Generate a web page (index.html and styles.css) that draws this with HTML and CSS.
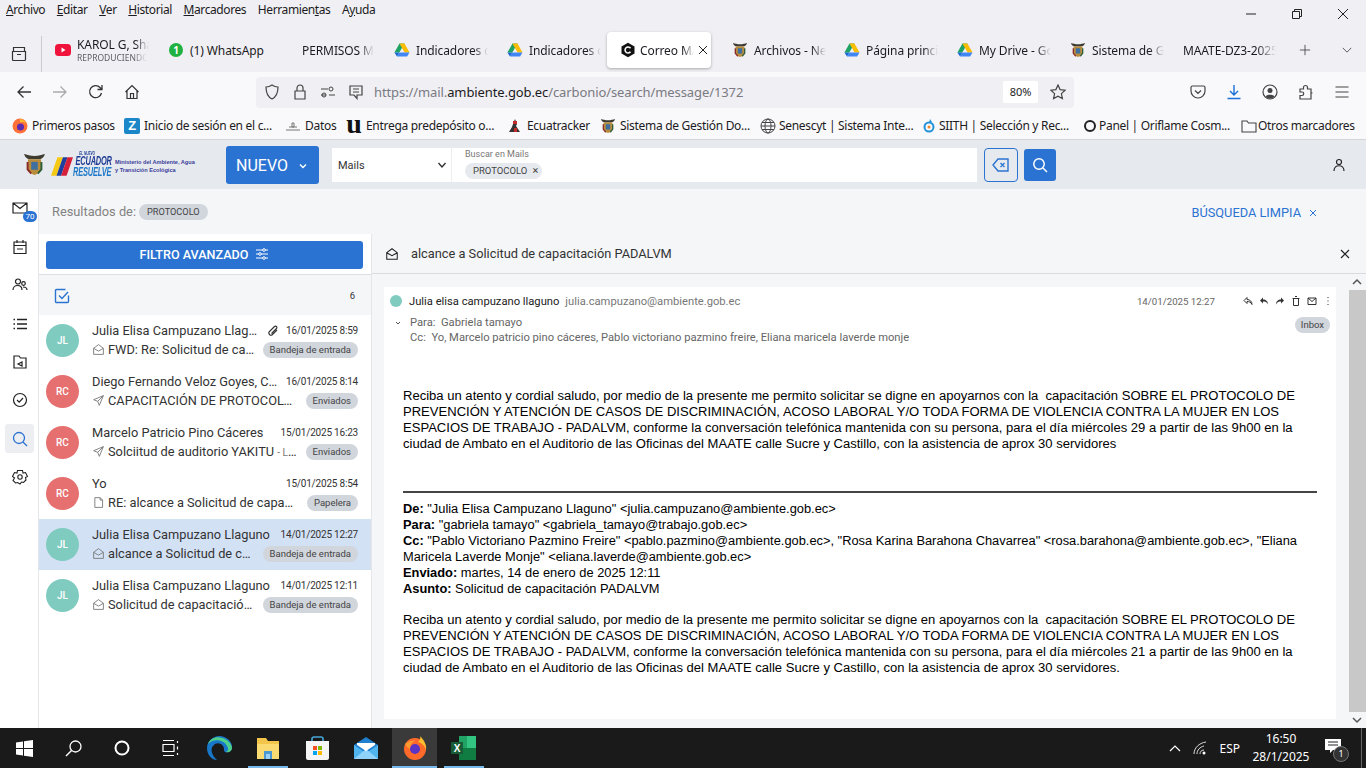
FILE: index.html
```html
<!DOCTYPE html>
<html lang="es">
<head>
<meta charset="utf-8">
<title>Correo MAATE</title>
<link rel="stylesheet" href="styles.css">
</head>
<body>
<svg class="defs" width="0" height="0">
  <symbol id="drive" viewBox="0 0 16 16"><path d="M5.500 1.500h5L5.300 10.500H.4z" fill="#1ea362"/><path d="M5.500 1.500h5l5 9h-5z" fill="#fbbc04"/><path d="M3 14.500l2.300-4h10.200l-2.400 4z" fill="#4285f4"/><path d="M.4 10.500h4.900l-2.300 4z" fill="#1967d2"/></symbol>
  <symbol id="coat" viewBox="0 0 16 18"><path d="M0 1c2 .5 5 1.500 8 1.500S14 1.500 16 1c-1 3-3 4-5 4H5C3 5 1 4 0 1z" fill="#3d3a30"/><path d="M3 5h10v7c0 2-2 4-5 5-3-1-5-3-5-5z" fill="#b98d3c"/><path d="M5.500 7h5v6h-5z" fill="#3f6f9e"/><path d="M2 7v6l3 3.500 1-1-2.500-3V7z" fill="#8c2a2a"/><path d="M14 7v6l-3 3.500-1-1 2.500-3V7z" fill="#2f5f3a"/></symbol>
  <symbol id="open" viewBox="0 0 16 16"><path d="M2 6.500 8 2l6 4.500V14H2z M2 6.500 8 10l6-3.500" fill="none" stroke="currentColor" stroke-width="1.100"/></symbol>
  <symbol id="send" viewBox="0 0 16 16"><path d="M14 2 2 7l5 2 2 5zM7 9l7-7" fill="none" stroke="currentColor" stroke-width="1.100"/></symbol>
  <symbol id="file" viewBox="0 0 16 16"><path d="M3.500 2H10l3 3v9H3.500zM10 2v3h3" fill="none" stroke="currentColor" stroke-width="1.100"/></symbol>
</svg>

<div class="menu-row">
  <span class="menu-item"><u>A</u>rchivo</span><span class="menu-item"><u>E</u>ditar</span><span class="menu-item"><u>V</u>er</span><span class="menu-item"><u>H</u>istorial</span><span class="menu-item"><u>M</u>arcadores</span><span class="menu-item">Herramien<u>t</u>as</span><span class="menu-item">A<u>y</u>uda</span>
  <div class="win-controls">
    <svg class="win-btn" viewBox="0 0 46 12"><path d="M18 6h10" stroke="#222" fill="none"/></svg>
    <svg class="win-btn" viewBox="0 0 46 12"><path d="M18.500 3.500h7v7h-7zM20.500 3.500v-2h7v7h-2" stroke="#222" fill="none"/></svg>
    <svg class="win-btn" viewBox="0 0 46 12"><path d="M18 1l10 10M28 1 18 11" stroke="#222" fill="none"/></svg>
  </div>
</div>

<div class="tab-row">
  <div class="tab-side"><svg width="16" height="16" viewBox="0 0 16 16"><path d="M1.500 5.500h13v8a1 1 0 0 1-1 1h-11a1 1 0 0 1-1-1zM2.500 1.500h11v4h-11zM6 8.500h4" fill="none" stroke="#333" stroke-width="1.200"/></svg></div>
  <div class="tab"><svg class="fav" viewBox="0 0 16 16"><rect y="2" width="16" height="12" rx="3.500" fill="#f0143c"/><path d="M6.500 5.500v5l4-2.500z" fill="#fff"/></svg><div class="tab-two"><span class="tab-text">KAROL G, Sha</span><span class="tab-sub">REPRODUCIENDO</span></div></div>
  <div class="tab"><svg class="fav" viewBox="0 0 16 16"><circle cx="8" cy="8" r="7" fill="#1fb141"/><text x="8" y="11.500" class="fav-num">1</text></svg><span class="tab-full">(1) WhatsApp</span></div>
  <div class="tab tab-noicon"><span class="tab-text">PERMISOS M</span></div>
  <div class="tab"><svg class="fav"><use href="#drive"/></svg><span class="tab-text">Indicadores d</span></div>
  <div class="tab"><svg class="fav"><use href="#drive"/></svg><span class="tab-text">Indicadores d</span></div>
  <div class="tab tab-active"><svg class="fav" viewBox="0 0 16 16"><path d="M8 .8 14.500 4.500v7L8 15.200 1.500 11.500v-7z" fill="#111"/><path d="M10.500 6.200A3 3 0 1 0 10.500 9.800" fill="none" stroke="#fff" stroke-width="1.600"/></svg><span class="tab-text tab-short">Correo MA</span><svg class="tab-x" viewBox="0 0 10 10"><path d="M1 1l8 8M9 1 1 9" stroke="#222" fill="none"/></svg></div>
  <div class="tab tab-gap"><svg class="fav"><use href="#coat"/></svg><span class="tab-text">Archivos - Ne</span></div>
  <div class="tab"><svg class="fav"><use href="#drive"/></svg><span class="tab-text">Página princip</span></div>
  <div class="tab"><svg class="fav"><use href="#drive"/></svg><span class="tab-text">My Drive - Go</span></div>
  <div class="tab"><svg class="fav"><use href="#coat"/></svg><span class="tab-text">Sistema de G</span></div>
  <div class="tab tab-noicon"><span class="tab-text tab-last">MAATE-DZ3-2025</span></div>
  <svg class="tab-plus" viewBox="0 0 14 14"><path d="M7 1v12M1 7h12" stroke="#444" fill="none"/></svg>
  <svg class="tab-more" viewBox="0 0 14 14"><path d="M2 4.500 7 9.500l5-5" stroke="#444" fill="none"/></svg>
</div>

<div class="nav-row">
  <svg class="nav-ic" viewBox="0 0 16 16"><path d="M15 8H2M7.500 2.500 2 8l5.500 5.500" stroke="#333" stroke-width="1.300" fill="none"/></svg>
  <svg class="nav-ic dim" viewBox="0 0 16 16"><path d="M1 8h13M8.500 2.500 14 8l-5.500 5.500" stroke="#aaa" stroke-width="1.300" fill="none"/></svg>
  <svg class="nav-ic" viewBox="0 0 16 16"><path d="M13.500 9A6 6 0 1 1 12 3.500L14 5.500M14 1v4.500H9.500" stroke="#333" stroke-width="1.300" fill="none"/></svg>
  <svg class="nav-ic" viewBox="0 0 16 16"><path d="M1.500 8 8 1.500 14.500 8M3 6.500V14.500h10V6.500M6.500 14.500V9.500h3v5" stroke="#333" stroke-width="1.200" fill="none"/></svg>
  <div class="address">
    <svg class="addr-ic" viewBox="0 0 16 16"><path d="M8 1c2 1.500 4 2 6 2 0 6-2 10-6 12C4 13 2 9 2 3c2 0 4-.5 6-2z" stroke="#444" stroke-width="1.200" fill="none"/></svg>
    <svg class="addr-ic" viewBox="0 0 16 16"><path d="M3 7h10v8H3zM5 7V4a3 3 0 0 1 6 0v3" stroke="#444" stroke-width="1.200" fill="none"/></svg>
    <svg class="addr-ic" viewBox="0 0 16 16"><path d="M1 5h7M1 11h5M9 11h6" stroke="#444" stroke-width="1.200" fill="none"/><circle cx="11" cy="5" r="2" stroke="#444" fill="none"/><circle cx="4" cy="11" r="2" stroke="#444" fill="none"/></svg>
    <svg class="addr-ic" viewBox="0 0 16 16"><path d="M2 2h12v9H9v3.500L6 11H2zM5 5h6M5 8h6" stroke="#444" stroke-width="1.200" fill="none"/></svg>
    <span class="url">https://mail.<b>ambiente.gob.ec</b>/carbonio/search/message/1372</span>
    <span class="zoom-badge">80%</span>
    <svg class="star" viewBox="0 0 16 16"><path d="M8 1l2.100 4.600 5 .6-3.700 3.400 1 4.900L8 12.100l-4.400 2.400 1-4.900L.9 6.200l5-.6z" stroke="#444" stroke-width="1.200" fill="none"/></svg>
  </div>
  <div class="nav-right">
    <svg class="nav-ic2" viewBox="0 0 16 16"><path d="M2.500 2h11A1.500 1.500 0 0 1 15 3.500V7A7 7 0 0 1 1 7V3.500A1.500 1.500 0 0 1 2.500 2zM5 6.500l3 3 3-3" stroke="#444" stroke-width="1.200" fill="none"/></svg>
    <svg class="nav-ic2" viewBox="0 0 16 16"><path d="M8 1v9.500M4 7l4 4 4-4M1.500 14.500h13" stroke="#1a6fd8" stroke-width="1.400" fill="none"/></svg>
    <svg class="nav-ic2" viewBox="0 0 16 16"><circle cx="8" cy="8" r="7" stroke="#444" stroke-width="1.200" fill="none"/><circle cx="8" cy="6.500" r="2.500" fill="#444"/><path d="M3.500 12.500c1-2.500 8-2.500 9 0a6 6 0 0 1-9 0z" fill="#444"/></svg>
    <svg class="nav-ic2" viewBox="0 0 16 16"><path d="M2 5h3.500V3.500a2 2 0 0 1 4 0V5H13v4h1.500a2 2 0 0 1 0 0H13v6H2v-3.500h2a1.700 1.700 0 0 0 0-3.500H2z" stroke="#444" stroke-width="1.200" fill="none"/></svg>
    <svg class="nav-ic2" viewBox="0 0 16 16"><path d="M1.500 3h13M1.500 8h13M1.500 13h13" stroke="#444" stroke-width="1.200" fill="none"/></svg>
  </div>
</div>

<div class="bm-row">
  <span class="bm w1"><svg class="bm-ic" viewBox="0 0 16 16"><circle cx="8" cy="8" r="7.500" fill="#ff7139"/><circle cx="8.500" cy="9" r="3.500" fill="#5b2bb0"/><path d="M8 .5c3 2 5 1 7 6-1-2-3-3-7-2z" fill="#ffbd2e"/></svg>Primeros pasos</span>
  <span class="bm w2"><span class="z-ic">Z</span>Inicio de sesión en el c...</span>
  <span class="bm w3"><svg class="bm-ic" viewBox="0 0 16 16"><path d="M1 12h14M4 9h8M7 5h2v4H7z" stroke="#777" fill="none"/></svg>Datos</span>
  <span class="bm w2"><span class="u-ic">u</span>Entrega predepósito o...</span>
  <span class="bm w4"><svg class="bm-ic" viewBox="0 0 16 16"><path d="M8 1l2 5-1 2 4 6H2l3-5 1-3z" fill="#333"/><path d="M6 3h4v3H6zM7 10h3v4H7z" fill="#c52a2a"/></svg>Ecuatracker</span>
  <span class="bm w5"><svg class="bm-ic"><use href="#coat"/></svg>Sistema de Gestión Do...</span>
  <span class="bm w2 g3"><svg class="bm-ic" viewBox="0 0 16 16"><circle cx="8" cy="8" r="7" stroke="#444" fill="none"/><ellipse cx="8" cy="8" rx="3" ry="7" stroke="#444" fill="none"/><path d="M1 8h14M2 4.500h12M2 11.500h12" stroke="#444" fill="none"/></svg>Senescyt | Sistema Inte...</span>
  <span class="bm w6 g2"><svg class="bm-ic" viewBox="0 0 16 16"><circle cx="8" cy="9" r="4.500" stroke="#2492d8" stroke-width="2" fill="none"/><circle cx="8" cy="9" r="1.500" fill="#ef8a2b"/><path d="M9 1l2 3-3 1z" fill="#2492d8"/></svg>SIITH | Selección y Rec...</span>
  <span class="bm w7 g1"><svg class="bm-ic" viewBox="0 0 16 16"><circle cx="8" cy="8" r="5" stroke="#222" stroke-width="2" fill="none"/></svg>Panel | Oriflame Cosm...</span>
  <span class="bm g1"><svg class="bm-ic" viewBox="0 0 16 16"><path d="M1 3h5l1.500 2H15v9H1z" stroke="#444" stroke-width="1.100" fill="none"/></svg>Otros marcadores</span>
</div>

<header class="app-head">
  <div class="logo">
    <svg class="logo-coat"><use href="#coat"/></svg>
    <svg class="logo-flag" viewBox="0 0 24 20"><path d="M7 0h6L6 20H0z" fill="#f6c915"/><path d="M13 0h5l-7 20H6z" fill="#1f3f9e"/><path d="M18 0h6l-7 20h-6z" fill="#d6203a"/></svg>
    <div class="logo-words"><span class="lw1">EL NUEVO</span><span class="lw2">ECUADOR</span><span class="lw3">RESUELVE</span></div>
    <div class="logo-min"><span>Ministerio del Ambiente, Agua</span><span>y Transición Ecológica</span></div>
  </div>
  <button class="btn-new">NUEVO<svg class="btn-chev" viewBox="0 0 10 10"><path d="M2 3.500 5 6.500 8 3.500" stroke="#fff" stroke-width="1.400" fill="none"/></svg></button>
  <div class="sel"><span>Mails</span><svg class="sel-chev" viewBox="0 0 10 10"><path d="M1.500 3 5 7l3.500-4" stroke="#333" stroke-width="1.400" fill="none"/></svg></div>
  <div class="search">
    <span class="search-label">Buscar en Mails</span>
    <span class="search-chip">PROTOCOLO<i class="chip-x">×</i></span>
  </div>
  <button class="btn-clear"><svg width="18" height="16" viewBox="0 0 18 16"><path d="M6 2h10v12H6L1 8zM8.500 6l4 4M12.500 6l-4 4" stroke="#2b73d2" stroke-width="1.400" fill="none"/></svg></button>
  <button class="btn-search"><svg width="16" height="16" viewBox="0 0 16 16"><circle cx="7" cy="7" r="5.200" stroke="#fff" stroke-width="1.500" fill="none"/><path d="M11 11l4 4" stroke="#fff" stroke-width="1.500"/></svg></button>
  <svg class="user-ic" viewBox="0 0 14 14"><circle cx="7" cy="4" r="2.500" stroke="#222" stroke-width="1.200" fill="none"/><path d="M2 13c0-7 10-7 10 0" stroke="#222" stroke-width="1.200" fill="none"/></svg>
</header>

<main class="app">
  <nav class="rail">
    <div class="rail-item rail-mail"><svg class="rail-ic" viewBox="0 0 16 16"><path d="M1 2h14v10H1zM1 2l7 5.500L15 2" stroke="#222" stroke-width="1.200" fill="none"/></svg><span class="rail-badge">70</span></div>
    <div class="rail-item"><svg class="rail-ic" viewBox="0 0 16 16"><path d="M2 3h12v11.500H2zM2 6.500h12M5 1v3M11 1v3M5 10h6" stroke="#222" stroke-width="1.200" fill="none"/></svg></div>
    <div class="rail-item"><svg class="rail-ic" viewBox="0 0 16 16"><circle cx="6" cy="4.500" r="2.500" stroke="#222" stroke-width="1.200" fill="none"/><circle cx="11.500" cy="6.500" r="1.800" stroke="#222" stroke-width="1.200" fill="none"/><path d="M1 13c0-6 9-6 9 0M11 10c3 0 4 1 4 3" stroke="#222" stroke-width="1.200" fill="none"/></svg></div>
    <div class="rail-item"><svg class="rail-ic" viewBox="0 0 16 16"><path d="M5 3.500h10M5 8h10M5 12.500h10M1.500 3.500h1.500M1.500 8h1.500M1.500 12.500h1.500" stroke="#222" stroke-width="1.300" fill="none"/></svg></div>
    <div class="rail-item"><svg class="rail-ic" viewBox="0 0 16 16"><path d="M2 2h5l1.500 2H14v10H2zM6 10l4-2v4z" stroke="#222" stroke-width="1.200" fill="none"/></svg></div>
    <div class="rail-item"><svg class="rail-ic" viewBox="0 0 16 16"><circle cx="8" cy="8" r="6.500" stroke="#222" stroke-width="1.200" fill="none"/><path d="M5 8l2.200 2.200L11 6" stroke="#222" stroke-width="1.200" fill="none"/></svg></div>
    <div class="rail-item rail-active"><svg class="rail-ic" viewBox="0 0 16 16"><circle cx="7" cy="7" r="5.500" stroke="#2b73d2" stroke-width="1.300" fill="none"/><path d="M11 11l4 4" stroke="#2b73d2" stroke-width="1.300"/></svg></div>
    <div class="rail-item"><svg class="rail-ic" viewBox="0 0 16 16"><path d="M5.500 1.500h5L11 4l2.500-.5 2 4-2 1 .5 2.500-2.500 2.500-2-.5L8 15l-2.500-1.500-2 .5L1 11.500l1.500-2.500-2-1.500 2-4L5 4z" stroke="#222" stroke-width="1.100" fill="none"/><circle cx="8" cy="8" r="2.200" stroke="#222" stroke-width="1.100" fill="none"/></svg></div>
  </nav>

  <section class="results">
    <div class="res-top">
      <div class="res-left"><span class="res-label">Resultados de:</span><span class="res-chip">PROTOCOLO</span></div>
      <div class="res-clean">BÚSQUEDA LIMPIA<svg class="clean-x" viewBox="0 0 10 10"><path d="M2 2l6 6M8 2 2 8" stroke="#2b73d2" fill="none"/></svg></div>
    </div>
    <div class="split">
      <div class="list-col">
        <div class="filter-wrap"><button class="btn-filter">FILTRO AVANZADO<svg width="14" height="12" viewBox="0 0 14 12"><path d="M1 2h12M1 6h12M1 10h12" stroke="#fff" fill="none"/><circle cx="9" cy="2" r="1.300" fill="#2b73d2" stroke="#fff"/><circle cx="5" cy="6" r="1.300" fill="#2b73d2" stroke="#fff"/><circle cx="9" cy="10" r="1.300" fill="#2b73d2" stroke="#fff"/></svg></button></div>
        <div class="count-row"><svg width="16" height="16" viewBox="0 0 16 16"><path d="M14.500 7.500v6a1 1 0 0 1-1 1h-11a1 1 0 0 1-1-1v-11a1 1 0 0 1 1-1h9" stroke="#2b73d2" stroke-width="1.400" fill="none"/><path d="M5 7.500l3 3 6-6.500" stroke="#2b73d2" stroke-width="1.400" fill="none"/></svg><span class="count">6</span></div>
        <div class="rows">
          <article class="row"><span class="avatar av-g">JL</span><div class="row-main"><div class="line"><span class="name">Julia Elisa Campuzano Llaguno</span><svg class="clip" viewBox="0 0 12 12"><path d="M10 5 5.500 9.500a2 2 0 0 1-3-3L7.500 1.500a1.400 1.400 0 0 1 2 2L4.500 8.500" stroke="#333" stroke-width="1.100" fill="none"/></svg><span class="date">16/01/2025 8:59</span></div><div class="line"><svg class="st"><use href="#open"/></svg><span class="subj">FWD: Re: Solicitud de capacitación</span><span class="tag">Bandeja de entrada</span></div></div></article>
          <article class="row"><span class="avatar av-r">RC</span><div class="row-main"><div class="line"><span class="name">Diego Fernando Veloz Goyes, Carlos</span><span class="date">16/01/2025 8:14</span></div><div class="line"><svg class="st"><use href="#send"/></svg><span class="subj">CAPACITACIÓN DE PROTOCOLO DE</span><span class="tag">Enviados</span></div></div></article>
          <article class="row"><span class="avatar av-r">RC</span><div class="row-main"><div class="line"><span class="name">Marcelo Patricio Pino Cáceres</span><span class="date">15/01/2025 16:23</span></div><div class="line"><svg class="st"><use href="#send"/></svg><span class="subj">Solciitud de auditorio YAKITU <small class="prev">- Le saludo</small></span><span class="tag">Enviados</span></div></div></article>
          <article class="row"><span class="avatar av-r">RC</span><div class="row-main"><div class="line"><span class="name">Yo</span><span class="date">15/01/2025 8:54</span></div><div class="line"><svg class="st"><use href="#file"/></svg><span class="subj">RE: alcance a Solicitud de capacitación</span><span class="tag">Papelera</span></div></div></article>
          <article class="row row-sel"><span class="avatar av-g">JL</span><div class="row-main"><div class="line"><span class="name">Julia Elisa Campuzano Llaguno</span><span class="date">14/01/2025 12:27</span></div><div class="line"><svg class="st"><use href="#open"/></svg><span class="subj">alcance a Solicitud de capacitación</span><span class="tag">Bandeja de entrada</span></div></div></article>
          <article class="row"><span class="avatar av-g">JL</span><div class="row-main"><div class="line"><span class="name">Julia Elisa Campuzano Llaguno</span><span class="date">14/01/2025 12:11</span></div><div class="line"><svg class="st"><use href="#open"/></svg><span class="subj">Solicitud de capacitación PADALVM</span><span class="tag">Bandeja de entrada</span></div></div></article>
        </div>
      </div>
      <div class="detail">
        <div class="detail-head"><svg class="dh-ic" viewBox="0 0 16 16"><path d="M2 6.500 8 2l6 4.500V14H2zM2 6.500 8 10l6-3.500" stroke="#222" stroke-width="1.200" fill="none"/></svg><span class="dh-title">alcance a Solicitud de capacitación PADALVM</span><svg class="dh-x" viewBox="0 0 10 10"><path d="M1 1l8 8M9 1 1 9" stroke="#222" stroke-width="1.200" fill="none"/></svg></div>
        <div class="detail-scroll">
          <div class="mail-card">
            <div class="mail-from">
              <span class="mini-av"></span><span class="from-name">Julia elisa campuzano llaguno</span><span class="from-mail">julia.campuzano@ambiente.gob.ec</span>
              <span class="from-date">14/01/2025 12:27</span>
              <div class="acts">
                <svg class="act" viewBox="0 0 10 10"><path d="M4 1.500 1 4.500l3 3V5.500c2 0 4 .5 5 3 0-3-2-5-5-5z" stroke="#333" fill="none"/></svg>
                <svg class="act" viewBox="0 0 10 10"><path d="M4 1.500 1 4.500l3 3V5.500c2 0 4 .5 5 3 0-3-2-5-5-5z" fill="#333"/></svg>
                <svg class="act" viewBox="0 0 10 10"><path d="M6 1.500l3 3-3 3V5.500c-2 0-4 .5-5 3 0-3 2-5 5-5z" fill="#333"/></svg>
                <svg class="act" viewBox="0 0 10 10"><path d="M1.500 2.500h7M2.500 2.500v7h5v-7M4 .5h2" stroke="#333" fill="none"/></svg>
                <svg class="act" viewBox="0 0 10 10"><path d="M1 2h8v6.500H1zM1 2l4 3.500L9 2" stroke="#333" fill="none"/></svg>
                <svg class="act" viewBox="0 0 10 10"><path d="M5 1v1M5 4.500v1M5 8v1" stroke="#333" fill="none"/></svg>
              </div>
            </div>
            <div class="mail-to">
              <svg class="to-chev" viewBox="0 0 8 8"><path d="M2 3l2 2 2-2" stroke="#555" fill="none"/></svg>
              <div class="to-lines">
                <span>Para:&nbsp; Gabriela tamayo</span>
                <span>Cc:&nbsp; Yo, Marcelo patricio pino cáceres, Pablo victoriano pazmino freire, Eliana maricela laverde monje</span>
              </div>
              <span class="inbox">Inbox</span>
            </div>
            <div class="mail-body">
              <p>Reciba un atento y cordial saludo, por medio de la presente me permito solicitar se digne en apoyarnos con la&nbsp; capacitación SOBRE EL PROTOCOLO DE PREVENCIÓN Y ATENCIÓN DE CASOS DE DISCRIMINACIÓN, ACOSO LABORAL Y/O TODA FORMA DE VIOLENCIA CONTRA LA MUJER EN LOS ESPACIOS DE TRABAJO - PADALVM, conforme la conversación telefónica mantenida con su persona, para el día miércoles 29 a partir de las 9h00 en la ciudad de Ambato en el Auditorio de las Oficinas del MAATE calle Sucre y Castillo, con la asistencia de aprox 30 servidores</p>
              <hr class="rule">
              <p class="quote-head"><b>De:</b> "Julia Elisa Campuzano Llaguno" &lt;julia.campuzano@ambiente.gob.ec&gt;<br><b>Para:</b> "gabriela tamayo" &lt;gabriela_tamayo@trabajo.gob.ec&gt;<br><b>Cc:</b> "Pablo Victoriano Pazmino Freire" &lt;pablo.pazmino@ambiente.gob.ec&gt;, "Rosa Karina Barahona Chavarrea" &lt;rosa.barahona@ambiente.gob.ec&gt;, "Eliana Maricela Laverde Monje" &lt;eliana.laverde@ambiente.gob.ec&gt;<br><b>Enviado:</b> martes, 14 de enero de 2025 12:11<br><b>Asunto:</b> Solicitud de capacitación PADALVM</p>
              <p>Reciba un atento y cordial saludo, por medio de la presente me permito solicitar se digne en apoyarnos con la&nbsp; capacitación SOBRE EL PROTOCOLO DE PREVENCIÓN Y ATENCIÓN DE CASOS DE DISCRIMINACIÓN, ACOSO LABORAL Y/O TODA FORMA DE VIOLENCIA CONTRA LA MUJER EN LOS ESPACIOS DE TRABAJO - PADALVM, conforme la conversación telefónica mantenida con su persona, para el día miércoles 21 a partir de las 9h00 en la ciudad de Ambato en el Auditorio de las Oficinas del MAATE calle Sucre y Castillo, con la asistencia de aprox 30 servidores.</p>
            </div>
          </div>
          <div class="scrollbar">
            <svg class="sb-arrow" viewBox="0 0 16 16"><path d="M4 10l4-4 4 4" stroke="#555" stroke-width="1.500" fill="none"/></svg>
            <div class="sb-thumb"></div>
            <svg class="sb-arrow" viewBox="0 0 16 16"><path d="M4 6l4 4 4-4" stroke="#555" stroke-width="1.500" fill="none"/></svg>
          </div>
        </div>
      </div>
    </div>
  </section>
</main>

<footer class="taskbar">
  <div class="tb-btn"><svg width="17" height="17" viewBox="0 0 17 17"><path d="M0 2.500 7 1.500v6.500H0zM8 1.300 17 0v8H8zM0 9h7v6.500L0 14.500zM8 9h9v8l-9-1.300z" fill="#fff"/></svg></div>
  <div class="tb-btn"><svg width="17" height="17" viewBox="0 0 17 17"><circle cx="10.500" cy="6.500" r="5.500" stroke="#fff" stroke-width="1.300" fill="none"/><path d="M6.500 10.500 1 16" stroke="#fff" stroke-width="1.500"/></svg></div>
  <div class="tb-btn"><svg width="16" height="16" viewBox="0 0 16 16"><circle cx="8" cy="8" r="6.500" stroke="#fff" stroke-width="2" fill="none"/></svg></div>
  <div class="tb-btn"><svg width="18" height="16" viewBox="0 0 18 16"><path d="M1 .5h11M1 15.500h11M1 4.500h11v7H1zM15.500 1v2M15.500 6.500v3M15.500 13v2" stroke="#fff" stroke-width="1.200" fill="none"/></svg></div>
  <div class="tb-btn"><svg width="25" height="25" viewBox="0 0 25 25"><path d="M12.500 0C19 0 25 5 25 11c0 4-4 6-7 5-2-1 0-3-2-6-2-3-7-4-10 0C3 13 5 20 10 24 4 24 0 18 0 12 0 5 6 0 12.500 0z" fill="#1877c9"/><path d="M1 8c2-6 9-8 14-6 5 1 10 6 10 10 0 3-3 5-6 4 2-1 3-3 1-6C18 5 8 1 1 8z" fill="#4fd08a"/></svg></div>
  <div class="tb-btn tb-open"><svg width="22" height="23" viewBox="0 0 22 23"><path d="M0 1h9l2 3h11v18H0z" fill="#f3c64b"/><path d="M0 7h22v15H0z" fill="#fadb72"/><path d="M7 14h8v8H7z" fill="#4b97d1"/><path d="M9 17h4v5H9z" fill="#9ad0f5"/></svg></div>
  <div class="tb-btn"><svg width="23" height="24" viewBox="0 0 23 24"><path d="M6 6V3a2 2 0 0 1 2-2h7a2 2 0 0 1 2 2v3" stroke="#47a6d8" stroke-width="1.600" fill="none"/><path d="M0 5h23v17a2 2 0 0 1-2 2H2a2 2 0 0 1-2-2z" fill="#f5f5f5"/><path d="M7 10h4v4H7z" fill="#f25022"/><path d="M12 10h4v4h-4z" fill="#7fba00"/><path d="M7 15h4v4H7z" fill="#00a4ef"/><path d="M12 15h4v4h-4z" fill="#ffb900"/></svg></div>
  <div class="tb-btn"><svg width="24" height="22" viewBox="0 0 24 22"><path d="M0 8 12 0l12 8v14H0z" fill="#1f7fd0"/><path d="M0 8l12 8 12-8v14H0z" fill="#50b4ee"/><path d="M0 22 12 12l12 10z" fill="#8fd3fa"/><path d="M3 6h18v2l-9 6-9-6z" fill="#fff"/></svg></div>
  <div class="tb-btn tb-open tb-active"><svg width="24" height="24" viewBox="0 0 24 24"><circle cx="12" cy="13" r="11" fill="#ff6a2b"/><path d="M17 0c4 4 7 9 6 14-1-4-4-7-8-8 2-2 3-4 2-6z" fill="#ffbc2e"/><circle cx="12" cy="13" r="5" fill="#5b34c4"/><path d="M2 8c3-3 7-4 10-3-3 1-5 4-5 8-2-1-4-3-5-5z" fill="#ff9a2e"/></svg></div>
  <div class="tb-btn tb-open"><svg width="25" height="24" viewBox="0 0 25 24"><path d="M8 0h17v12H8z" fill="#21a366"/><path d="M16 0h9v12h-9z" fill="#33c481"/><path d="M8 12h17v12H8z" fill="#107c41"/><path d="M0 6h12v12H0z" fill="#185c37"/><text x="6" y="16" class="xl">X</text></svg></div>
  <div class="tray">
    <svg class="tray-chev" viewBox="0 0 12 8"><path d="M1 7l5-5 5 5" stroke="#fff" stroke-width="1.200" fill="none"/></svg>
    <svg class="tray-wifi" viewBox="0 0 14 14"><path d="M1 13C1 7 6 2 13 1M4 13c0-4 3-7 7-8M7 13c0-2 1-4 4-4" stroke="#ddd" fill="none"/><circle cx="11" cy="12" r="1.500" fill="#fff"/></svg>
    <span class="tray-lang">ESP</span>
    <div class="clock"><span>16:50</span><span>28/1/2025</span></div>
    <div class="notif"><svg width="16" height="14" viewBox="0 0 16 14"><path d="M0 0h16v11H8l-3 3v-3H0z" fill="#fff"/><path d="M3 3h10M3 6h10" stroke="#222"/></svg><span class="notif-num">1</span></div>
    <span class="tray-edge"></span>
  </div>
</footer>
</body>
</html>
```
FILE: styles.css
```css
* { box-sizing: border-box; }
html, body { margin: 0; height: 768px; overflow: hidden; background: #f0f0f4; }
body { width: 1366px; display: flex; flex-direction: column; font-family: "Noto Sans", "Liberation Sans", sans-serif; font-size: 12px; color: #1c1b22; }
.defs { display: block; height: 0; }
svg { flex: none; display: block; }
button { border: 0; padding: 0; font: inherit; }

.menu-row { height: 30px; display: flex; padding: 1px 0 0 6px; line-height: 17px; align-items: flex-start; }
.menu-item { margin-right: 11.600px; letter-spacing: -.4px; }
.win-controls { margin-left: auto; display: flex; padding-top: 7px; }
.win-btn { width: 46px; height: 12px; }

.tab-row { height: 42px; display: flex; align-items: flex-start; padding-top: 2px; }
.tab-side { width: 42px; height: 36px; display: flex; align-items: center; justify-content: center; border-right: 1px solid #c9c9cf; margin-top: 4px; padding-right: 4px; }
.tab { width: 113px; height: 36px; flex: none; display: flex; align-items: center; padding-left: 13px; gap: 6px; }
.tab-noicon { padding-left: 34px; }
.tab-active { width: 104px; background: #fff; border-radius: 4px; box-shadow: 0 1px 3px rgba(0,0,0,.3); gap: 4px; }
.tab-gap { width: 111px; margin-left: 9px; padding-left: 12px; }
.fav { width: 16px; height: 16px; }
.fav-num { font: 700 10px "Noto Sans", sans-serif; fill: #fff; text-anchor: middle; }
.tab-full { white-space: nowrap; letter-spacing: -.1px; line-height: 15px; }
.tab-text { white-space: nowrap; width: 72px; -webkit-mask-image: linear-gradient(90deg, #000 80%, transparent); mask-image: linear-gradient(90deg, #000 80%, transparent); letter-spacing: -.1px; line-height: 15px; }
.tab-short { width: 54px; }
.tab-last { width: 93px; margin-left: -21px; }
.tab-two { display: flex; flex-direction: column; }
.tab-sub { font-size: 8.500px; line-height: 11px; color: #5b5b66; width: 70px; white-space: nowrap; -webkit-mask-image: linear-gradient(90deg, #000 80%, transparent); mask-image: linear-gradient(90deg, #000 80%, transparent); }
.tab-x { width: 10px; height: 10px; }
.tab-plus { width: 12px; height: 12px; margin: 12px 0 0 16px; }
.tab-more { width: 12px; height: 12px; margin: 12px 0 0 30px; }

.nav-row { height: 40px; background: #f9f9fb; display: flex; align-items: center; padding-left: 16px; flex: none; }
.nav-ic { width: 16px; height: 16px; margin-right: 20px; }
.address { width: 818px; height: 31px; background: #f0f0f4; border-radius: 4px; margin-left: 96px; display: flex; align-items: center; padding-left: 8px; }
.addr-ic { width: 16px; height: 16px; margin-right: 12px; }
.url { margin-left: -2px; font-size: 13px; color: #7a7a82; letter-spacing: -.1px; }
.url b { font-weight: 400; color: #1c1b22; }
.zoom-badge { margin-left: auto; width: 35px; height: 22px; background: #fff; border-radius: 2px; font-size: 11px; text-align: center; line-height: 22px; }
.star { width: 16px; height: 16px; margin: 0 8px 0 12px; }
.nav-right { display: flex; margin-left: 116px; gap: 20px; }
.nav-ic2 { width: 16px; height: 16px; }

.bm-row { height: 28px; background: #f9f9fb; display: flex; align-items: center; padding-left: 12px; flex: none; line-height: 16px; border-bottom: 1px solid #d5d5d8; }
.bm { display: flex; align-items: center; gap: 4px; white-space: nowrap; letter-spacing: -.3px; flex: none; }
.g3 { gap: 3px; } .g2 { gap: 2px; } .g1 { gap: 1px; }
.w1 { width: 112px; } .w2 { width: 161px; } .w3 { width: 61px; } .w4 { width: 93px; } .w5 { width: 160px; } .w6 { width: 161px; } .w7 { width: 159px; }
.bm-ic { width: 16px; height: 16px; }
.z-ic { width: 16px; height: 16px; background: #1b87c9; color: #fff; font: 700 13px/16px "Liberation Sans", sans-serif; text-align: center; border-radius: 2px; }
.u-ic { width: 16px; font: 700 28px/12px "Liberation Serif", serif; color: #111; text-align: center; height: 16px; letter-spacing: 0; }

.app-head { height: 49px; background: #e6eaee; flex: none; display: flex; align-items: center; font-family: Roboto, sans-serif; }
.logo { width: 226px; display: flex; align-items: center; padding-left: 24px; height: 36px; }
.logo-coat { width: 21px; height: 25px; }
.logo-flag { width: 22px; height: 19px; margin-left: 6px; margin-top: 3px; }
.logo-words { width: 41px; display: flex; flex-direction: column; font-family: "Liberation Sans", sans-serif; font-style: italic; font-weight: 700; color: #1d3a94; line-height: 1; transform: scaleX(.62); transform-origin: left center; white-space: nowrap; }
.lw1 { font-size: 5px; line-height: 5px; padding-left: 10px; }
.lw2 { font-size: 12px; line-height: 11px; letter-spacing: -.3px; padding-left: 4px; }
.lw3 { font-size: 12px; line-height: 11px; color: #1f78c8; letter-spacing: -.3px; }
.logo-min { display: flex; flex-direction: column; margin: 2px 0 0 1px; font: 700 5.600px/8px "Liberation Sans", sans-serif; color: #3b3d9a; white-space: nowrap; }
.btn-new { width: 93px; height: 38px; background: #2b73d2; color: #fff; border-radius: 3px; font: 400 16px Roboto, sans-serif; display: flex; align-items: center; padding: 2px 0 0 10px; }
.btn-chev { width: 10px; height: 10px; margin-left: 10px; }
.sel { width: 120px; height: 34px; margin-left: 13px; background: #fff; display: flex; align-items: center; padding: 1px 4px 0 6px; font-size: 11px; color: #333; border-right: 1px solid #eee; }
.sel-chev { margin-left: auto; width: 10px; height: 10px; }
.search { width: 525px; height: 34px; background: #fff; padding: 0 0 0 13px; display: flex; flex-direction: column; align-items: flex-start; }
.search-label { font-size: 9px; color: #777; line-height: 12px; }
.search-chip { margin-top: 3px; background: #e6eaee; border-radius: 9px; height: 16px; font-size: 9.500px; line-height: 16px; padding: 0 4px 0 8px; color: #444; display: flex; gap: 5px; }
.chip-x { font-style: normal; font-size: 11px; }
.btn-clear { width: 34px; height: 34px; margin-left: 7px; border: 1px solid #2b73d2; border-radius: 4px; background: transparent; display: flex; align-items: center; justify-content: center; }
.btn-search { width: 32px; height: 32px; margin-left: 6px; background: #2b73d2; border-radius: 3px; display: flex; align-items: center; justify-content: center; }
.user-ic { width: 14px; height: 14px; margin-left: 276px; }

.app { height: 539px; flex: none; display: flex; font-family: Roboto, sans-serif; background: #f5f6f8; }
.rail { width: 39px; flex: none; background: #fff; border-right: 1px solid #e4e6ea; padding: 0 4px 0 5px; display: flex; flex-direction: column; align-items: stretch; }
.rail-item { height: 29px; margin-top: 9.400px; display: flex; align-items: center; justify-content: center; position: relative; border-radius: 3px; }
.rail-mail { margin-top: 5px; }
.rail-ic { width: 16px; height: 16px; }
.rail-active { background: #eceef2; }
.rail-badge { position: absolute; right: -3px; top: 17px; width: 14px; height: 11px; border-radius: 6px; background: #2b73d2; color: #fff; font-size: 8px; line-height: 11px; text-align: center; }

.results { flex: 1; display: flex; flex-direction: column; min-width: 0; }
.res-top { height: 45px; display: flex; justify-content: space-between; padding: 13px 48px 0 13px; }
.res-left { display: flex; gap: 3px; align-items: flex-start; }
.res-label { font-size: 12.800px; color: #828282; line-height: 20px; }
.res-chip { background: #d1d5dc; border-radius: 8px; height: 16px; padding: 0 8px; font-size: 9.200px; line-height: 16px; color: #444; margin-top: 2px; }
.res-clean { color: #2b73d2; font-size: 12.800px; line-height: 20px; display: flex; align-items: center; gap: 7px; height: 20px; margin-top: 1px; }
.clean-x { width: 10px; height: 10px; }
.split { flex: 1; display: flex; min-height: 0; }
.list-col { width: 332px; flex: none; display: flex; flex-direction: column; background: #fff; }
.filter-wrap { height: 41px; padding: 7px 8px 0 7px; background: #fff; border-bottom: 1px solid #dcdfe3; }
.btn-filter { width: 317px; height: 28px; background: #2b73d2; color: #fff; border-radius: 3px; font: 500 12.600px Roboto, sans-serif; display: flex; align-items: center; justify-content: center; gap: 7px; padding-bottom: 2px; }
.count-row { height: 40px; background: #f5f6f8; display: flex; align-items: center; justify-content: space-between; padding: 1px 16px 0 15px; font-size: 9.500px; color: #333; }
.rows { flex: 1; background: #fff; }
.row { height: 51px; display: flex; align-items: center; padding: 0 13px 0 7px; }
.row-sel { background: #d3e1f5; }
.avatar { width: 33px; height: 33px; border-radius: 50%; color: #fff; font-size: 10px; font-weight: 500; text-align: center; line-height: 33px; flex: none; }
.av-g { background: #7fcbc0; }
.av-r { background: #e66f6f; }
.row-main { flex: 1; min-width: 0; margin: -1px 0 0 13px; display: flex; flex-direction: column; gap: 3px; }
.line { display: flex; align-items: center; height: 16px; }
.name { flex: 1; font-size: 12.800px; color: #333; white-space: nowrap; overflow: hidden; text-overflow: ellipsis; min-width: 0; }
.clip { width: 12px; height: 12px; margin: 0 7px 0 8px; }
.date { font-size: 10px; letter-spacing: -.2px; color: #333; flex: none; margin-left: 6px; white-space: nowrap; }
.clip + .date { margin-left: 0; }
.st { width: 13px; height: 13px; color: #777; margin-right: 3px; flex: none; }
.subj { flex: 1; min-width: 0; font-size: 12.800px; color: #333; white-space: nowrap; overflow: hidden; text-overflow: ellipsis; }
.prev { font-size: 10px; color: #777; }
.tag { flex: none; margin-left: 8px; background: #d1d5dc; border-radius: 8px; height: 16px; padding: 0 7px; font-size: 9.500px; line-height: 16px; color: #444; }

.detail { flex: 1; min-width: 0; display: flex; flex-direction: column; border-left: 1px solid #e4e6ea; }
.detail-head { height: 40px; display: flex; align-items: center; padding: 0 16px 0 13px; border-bottom: 1px solid #d8dbe0; }
.dh-ic { width: 14px; height: 14px; }
.dh-title { margin-left: 12px; font-size: 12.800px; color: #333; }
.dh-x { width: 10px; height: 10px; margin-left: auto; }
.detail-scroll { flex: 1; display: flex; min-height: 0; padding-left: 12px; }
.mail-card { width: 952px; height: 432px; margin-top: 13px; background: #fff; padding: 7px 3px 0 6px; flex: none; overflow: hidden; }
.mail-from { display: flex; align-items: center; height: 14px; font-size: 11.200px; color: #333; }
.mini-av { width: 12px; height: 12px; border-radius: 50%; background: #7fcbc0; }
.from-name { margin-left: 7px; color: #222; }
.from-mail { margin-left: 6px; color: #777; }
.from-date { margin-left: auto; color: #666; font-size: 9.700px; }
.acts { display: flex; gap: 6px; margin-left: 28px; }
.act { width: 10px; height: 10px; }
.mail-to { display: flex; margin-top: 7px; font-size: 11.200px; color: #666; }
.to-chev { width: 8px; height: 8px; margin: 4px 8px 0 4px; }
.to-lines { display: flex; flex-direction: column; line-height: 15px; }
.inbox { margin: 2px 3px 0 auto; background: #d1d5dc; border-radius: 8px; height: 16px; padding: 0 6px; font-size: 9.500px; line-height: 16px; color: #444; }
.mail-body { margin-top: 43px; padding: 0 16px 0 13px; font: 13.060px/16px "Liberation Sans", Arial, sans-serif; color: #000; }
.mail-body p { margin: 0; }
.rule { border: 0; border-top: 2px solid #444; margin: 39px 0 8px; }
.mail-body .quote-head { margin-bottom: 15px; font-size: 12.850px; }
.scrollbar { width: 17px; margin-left: 13px; display: flex; flex-direction: column; background: #f5f6f8; flex: none; }
.sb-arrow { width: 16px; height: 16px; }
.sb-thumb { flex: 1; background: #c8c8c8; }

.taskbar { height: 40px; background: #1a1a1a; flex: none; display: flex; align-items: center; font-family: "Noto Sans", sans-serif; color: #fff; }
.tb-btn { width: 48.800px; height: 40px; flex: none; display: flex; align-items: center; justify-content: center; }
.tb-open { background: linear-gradient(#76b9ed, #76b9ed) center bottom / 40px 2px no-repeat; }
.tb-active { background: linear-gradient(#76b9ed, #76b9ed) center bottom / 45px 2px no-repeat, linear-gradient(#3a3a3a, #3a3a3a) center / 45px 100% no-repeat; }
.xl { font: 700 10px "Liberation Sans", sans-serif; fill: #fff; text-anchor: middle; }
.tray { margin-left: auto; display: flex; align-items: center; height: 40px; }
.tray-chev { width: 12px; height: 8px; }
.tray-wifi { width: 14px; height: 14px; margin-left: 12px; }
.tray-lang { font-size: 12px; margin-left: 12px; }
.clock { width: 70px; margin-left: 6px; display: flex; flex-direction: column; align-items: center; font-size: 12px; line-height: 18px; }
.notif { position: relative; width: 24px; height: 24px; margin-left: 9px; }
.notif > svg { margin-top: 3px; }
.notif-num { position: absolute; right: 0; bottom: -2px; width: 16px; height: 16px; border-radius: 50%; background: #333; border: 1px solid #777; font-size: 9px; line-height: 14px; text-align: center; }
.tray-edge { width: 1px; height: 40px; background: #666; margin: 0 4px 0 12px; }
```
